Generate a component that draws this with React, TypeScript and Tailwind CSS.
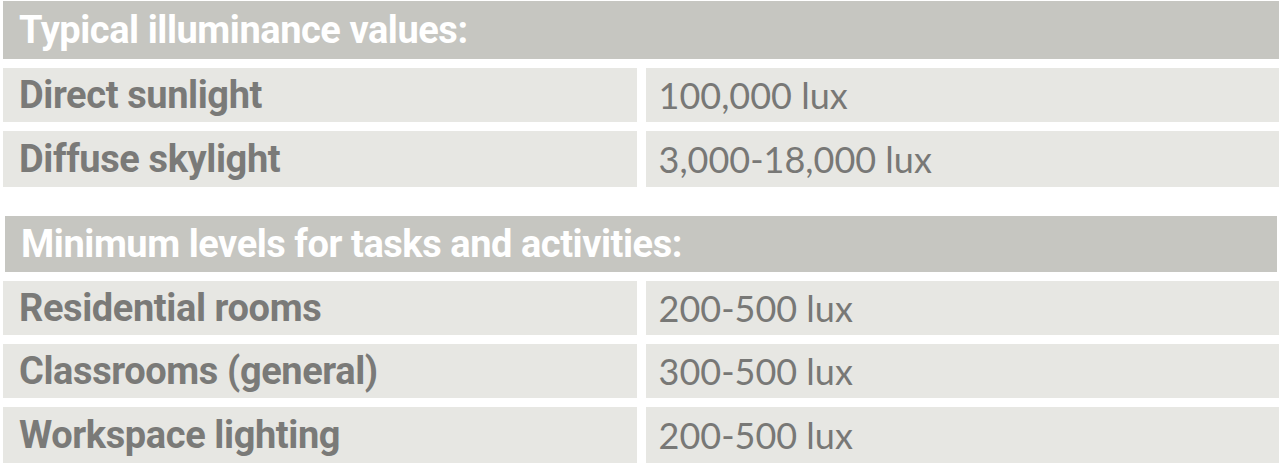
const typical = [
  { label: 'Direct sunlight', value: '100,000 lux', h: 'h-[54px]' },
  { label: 'Diffuse skylight', value: '3,000-18,000 lux', h: 'h-[56px]' },
];

const minimum = [
  { label: 'Residential rooms', value: '200-500 lux', h: 'h-[54px]' },
  { label: 'Classrooms (general)', value: '300-500 lux', h: 'h-[54px]' },
  { label: 'Workspace lighting', value: '200-500 lux', h: 'h-[56px]' },
];

const condensed = { fontFamily: 'Roboto, "Liberation Sans", sans-serif' };

function Header({ title, className }: { title: string; className: string }) {
  return (
    <div
      className={`flex items-center bg-[#c6c6c1] pl-[16px] text-[38px] font-bold leading-none tracking-[-0.45px] text-white ${className}`}
      style={condensed}
    >
      {title}
    </div>
  );
}

function Row({ label, value, h }: { label: string; value: string; h: string }) {
  return (
    <div className={`grid grid-cols-2 gap-[9px] ${h}`}>
      <div
        className="flex items-center bg-[#e7e7e3] pl-[16px] text-[38px] font-bold leading-none tracking-[-0.4px] text-[#7a7a78]"
        style={condensed}
      >
        {label}
      </div>
      <div
        className="flex items-center bg-[#e7e7e3] pl-[13px] text-[36px] leading-none text-[#787876]"
        style={{ fontFamily: 'Lato, sans-serif' }}
      >
        {value}
      </div>
    </div>
  );
}

export default function App() {
  return (
    <div className="h-[468px] w-[1280px] bg-white pl-[3px] pr-[1px] pt-[1px]">
      <div className="flex flex-col gap-[9px]">
        <Header title="Typical illuminance values:" className="h-[58px]" />
        {typical.map((r) => (
          <Row key={r.label} {...r} />
        ))}
      </div>
      <div className="mt-[29px] flex flex-col gap-[9px]">
        <Header title="Minimum levels for tasks and activities:" className="ml-[2px] mr-[2px] h-[56px]" />
        {minimum.map((r) => (
          <Row key={r.label} {...r} />
        ))}
      </div>
    </div>
  );
}
